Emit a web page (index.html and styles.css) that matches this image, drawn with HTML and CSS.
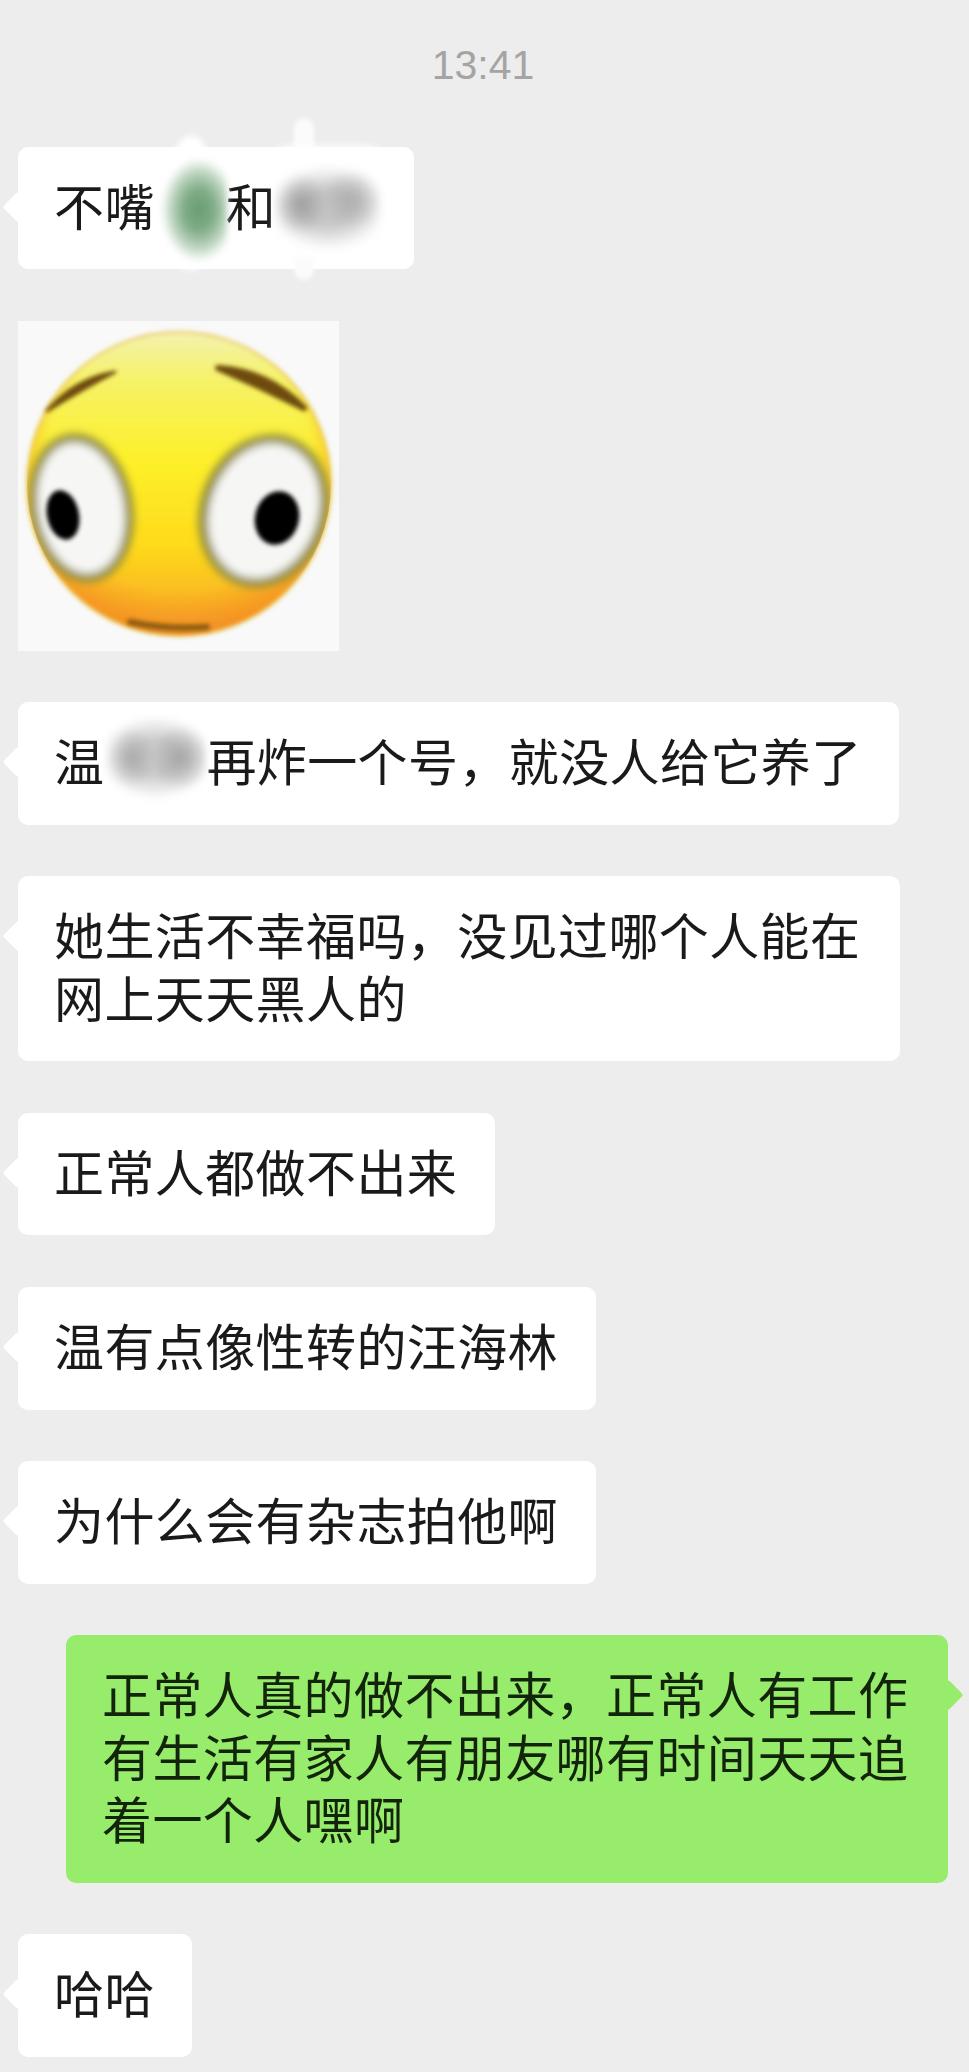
FILE: index.html
```html
<!DOCTYPE html>
<html lang="zh-CN">
<head>
  <meta charset="UTF-8">
  <meta name="viewport" content="width=device-width, initial-scale=1.0">
  <title>聊天记录</title>
  <link rel="stylesheet" href="styles.css">
</head>
<body>
<main class="chat">
  <div class="time">13:41</div>

  <div class="row">
    <div class="bubble">不嘴<span class="redact redact-leaf"></span>和<span class="redact redact-name"></span></div>
  </div>

  <div class="row">
    <div class="sticker">
      <svg width="321" height="330" viewBox="0 0 321 330">
        <defs>
          <linearGradient id="face" x1="0" y1="0" x2="0" y2="1">
            <stop offset="0" stop-color="#f3f2b0"/>
            <stop offset="0.16" stop-color="#f6f268"/>
            <stop offset="0.42" stop-color="#fdf02a"/>
            <stop offset="0.7" stop-color="#fedb1c"/>
            <stop offset="0.9" stop-color="#f9b423"/>
            <stop offset="1" stop-color="#eda838"/>
          </linearGradient>
          <radialGradient id="blush" cx="0.5" cy="0.42" r="0.62">
            <stop offset="0.7" stop-color="#f58a20" stop-opacity="0"/>
            <stop offset="1" stop-color="#f47f1e" stop-opacity="0.9"/>
          </radialGradient>
          <clipPath id="face-clip"><circle cx="161" cy="163" r="152"/></clipPath>
          <filter id="soft" x="-10%" y="-10%" width="120%" height="120%"><feGaussianBlur stdDeviation="2"/></filter>
          <filter id="softer" x="-20%" y="-20%" width="140%" height="140%"><feGaussianBlur stdDeviation="4"/></filter>
        </defs>
        <g filter="url(#soft)">
          <circle cx="161" cy="163" r="152" fill="url(#face)" stroke="#e8c24a" stroke-width="2"/>
          <circle cx="161" cy="163" r="151" fill="url(#blush)"/>
        </g>
        <g clip-path="url(#face-clip)">
          <g filter="url(#softer)">
            <ellipse cx="63" cy="187" rx="52" ry="75" transform="rotate(-10 63 187)" fill="#8f8a3c"/>
            <ellipse cx="246" cy="190" rx="64" ry="78" transform="rotate(20 246 190)" fill="#8f8a3c"/>
            <ellipse cx="63" cy="187" rx="43" ry="66" transform="rotate(-10 63 187)" fill="#f6f6f4"/>
            <ellipse cx="246" cy="190" rx="54" ry="69" transform="rotate(20 246 190)" fill="#f6f6f4"/>
          </g>
        </g>
        <g filter="url(#soft)">
          <ellipse cx="45" cy="194" rx="16" ry="25" transform="rotate(-12 45 194)" fill="#050505"/>
          <ellipse cx="259" cy="197" rx="22" ry="27" transform="rotate(14 259 197)" fill="#050505"/>
          <path d="M29 90 Q56 58 97 51 Q68 66 29 90 Z" fill="#6e4c08" stroke="#6e4c08" stroke-width="3" stroke-linejoin="round"/>
          <path d="M200 47 Q250 50 286 87 Q244 66 200 47 Z" fill="#6e4c08" stroke="#6e4c08" stroke-width="6" stroke-linejoin="round"/>
          <path d="M112 301 Q150 309 189 306" fill="none" stroke="#8a5a10" stroke-width="6" stroke-linecap="round"/>
        </g>
      </svg>
    </div>
  </div>

  <div class="row">
    <div class="bubble">温<span class="redact redact-short"></span>再炸一个号，就没人给它养了</div>
  </div>

  <div class="row">
    <div class="bubble">她生活不幸福吗，没见过哪个人能在网上天天黑人的</div>
  </div>

  <div class="row">
    <div class="bubble">正常人都做不出来</div>
  </div>

  <div class="row">
    <div class="bubble">温有点像性转的汪海林</div>
  </div>

  <div class="row">
    <div class="bubble">为什么会有杂志拍他啊</div>
  </div>

  <div class="row row-me">
    <div class="bubble bubble-me">正常人真的做不出来，正常人有工作有生活有家人有朋友哪有时间天天追着一个人嘿啊</div>
  </div>

  <div class="row">
    <div class="bubble">哈哈</div>
  </div>
</main>
</body>
</html>
```

FILE: styles.css
```css
html, body {
  margin: 0;
  padding: 0;
  background-color: #ededed;
}
body {
  font-family: "Noto Sans CJK SC", "Liberation Sans", sans-serif;
  color: #1a1a1a;
}
.chat {
  display: flex;
  flex-direction: column;
  gap: 51.6px;
  padding: 41px 21px 14px 18px;
}
.time {
  font-family: "Liberation Sans", sans-serif;
  font-size: 41px;
  line-height: 48px;
  color: #a4a4a4;
  text-align: center;
  margin-bottom: 6px;
}
.row {
  display: flex;
}
.row-me {
  justify-content: flex-end;
}
.bubble {
  position: relative;
  box-sizing: border-box;
  max-width: 882px;
  padding: 26px 37.5px 34px 36px;
  font-size: 50px;
  line-height: 62.5px;
  letter-spacing: 0.4px;
  background-color: #fff;
  border-radius: 10px;
}
.bubble::before {
  content: "";
  position: absolute;
  top: 49px;
  left: -11px;
  width: 22px;
  height: 22px;
  background-color: #fff;
  border-radius: 3px;
  transform: rotate(45deg);
}
.bubble-me {
  background-color: #98ec6c;
  color: #12240a;
}
.bubble-me::before {
  left: auto;
  right: -11px;
  background-color: #98ec6c;
}
.sticker {
  width: 321px;
  height: 330px;
  background-color: #f8f9f8;
}
.sticker svg {
  display: block;
}
/* smudges painted over names, they run outside the bubble */
.redact {
  position: relative;
  display: inline-block;
  height: 50px;
  vertical-align: -6px;
}
.redact::before,
.redact::after {
  content: "";
  position: absolute;
}
.redact-leaf {
  width: 71px;
}
.redact-leaf::before {
  left: 22px;
  top: -46px;
  width: 28px;
  height: 134px;
  background-color: #fff;
  border-radius: 14px;
  filter: blur(3px);
}
.redact-leaf::after {
  left: 2px;
  top: -24px;
  width: 70px;
  height: 104px;
  background: radial-gradient(ellipse 38px 52px at 60% 50%, #689c70 0, #80ad87 40%, #bcd4bf 72%, #fff 100%);
  border-radius: 24px;
  filter: blur(3px);
}
.redact-name {
  width: 100px;
}
.redact-name::before {
  left: 18px;
  top: -64px;
  width: 20px;
  height: 162px;
  background-color: #fbfbfb;
  border-radius: 10px;
  filter: blur(2px);
}
.redact-name::after {
  left: 0;
  top: -36px;
  width: 104px;
  height: 112px;
  background:
    radial-gradient(ellipse 26px 30px at 24% 52%, #9d9d9d 0, rgba(157,157,157,0) 100%),
    radial-gradient(ellipse 30px 30px at 72% 48%, #adadad 0, rgba(173,173,173,0) 100%),
    radial-gradient(ellipse 60px 42px at 50% 55%, #c6c6c6 40%, rgba(255,255,255,0) 100%),
    #fff;
  border-radius: 12px;
  filter: blur(4px);
}
.redact-short {
  width: 102px;
}
.redact-short::after {
  left: 2px;
  top: -20px;
  width: 100px;
  height: 90px;
  background:
    radial-gradient(ellipse 24px 30px at 26% 45%, #ababab 0, rgba(171,171,171,0) 100%),
    radial-gradient(ellipse 30px 32px at 74% 45%, #a6a6a6 0, rgba(166,166,166,0) 100%),
    radial-gradient(ellipse 58px 42px at 50% 45%, #cacaca 40%, rgba(255,255,255,0) 100%),
    #fff;
  border-radius: 14px;
  filter: blur(3px);
}
```
